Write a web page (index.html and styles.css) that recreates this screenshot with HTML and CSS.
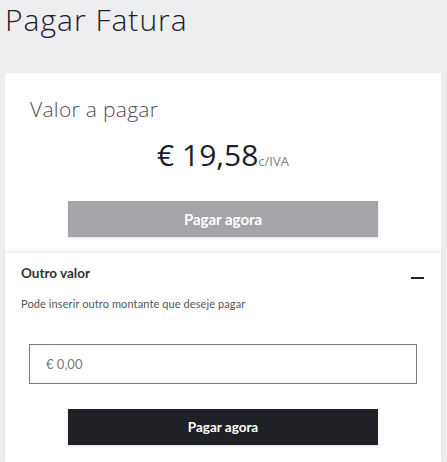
FILE: index.html
```html
<!DOCTYPE html>
<html>
<head>
    <meta charset="UTF-8">
    <title>Pagar Fatura</title>
    <link rel="stylesheet" href="styles.css">
</head>
<body>
    <h1 class="page-title">Pagar Fatura</h1>
    <div class="card">
        <div class="amount-section">
            <h2 class="amount-label">Valor a pagar</h2>
            <div class="amount-value">€ 19,58<span class="tax">c/IVA</span></div>
            <button class="pay-btn disabled">Pagar agora</button>
        </div>
        <div class="other-section">
            <div class="other-header">
                <span class="other-title">Outro valor</span>
                <span class="toggle"></span>
            </div>
            <p class="other-hint">Pode inserir outro montante que deseje pagar</p>
            <input type="text" class="amount-input" placeholder="€ 0,00">
            <button class="pay-btn primary">Pagar agora</button>
        </div>
    </div>
</body>
</html>
```
FILE: styles.css
```css
body {
    background: #eeeef1;
    font-family: Lato, 'Open Sans', sans-serif;
    margin: 0;
    color: #202027;
}

.page-title {
    margin: 0;
    padding: 2px 0 0 5px;
    font-family: 'Open Sans', sans-serif;
    font-size: 30px;
    font-weight: 300;
    line-height: 36px;
    letter-spacing: 1px;
}

.card {
    background: #fff;
    margin: 35px 6px 0 5px;
}

.amount-section {
    padding: 22px 25px 16px;
    text-align: center;
}

.amount-label {
    margin: 0;
    text-align: left;
    font-family: 'Open Sans', sans-serif;
    font-size: 21px;
    font-weight: 300;
    color: #505058;
    line-height: 28px;
    letter-spacing: 0.3px;
}

.amount-value {
    margin-top: 12px;
    font-family: 'Open Sans', sans-serif;
    font-size: 30px;
    line-height: 40px;
}

.tax {
    font-size: 13px;
    color: #808088;
}

.pay-btn {
    display: block;
    width: 310px;
    height: 36px;
    margin: 0 auto;
    border: none;
    font-family: Lato, sans-serif;
    font-weight: 700;
    color: #fff;
    box-shadow: 0 1px 2px rgba(0, 0, 0, 0.12);
}

.pay-btn.disabled {
    margin-top: 20px;
    background: #a5a4a9;
    font-size: 15px;
}

.pay-btn.primary {
    margin-top: 25px;
    background: #202027;
    font-size: 13.5px;
}

.other-section {
    padding: 8px 24px 17px;
    box-shadow: 0 -2px 5px rgba(0, 0, 0, 0.08);
}

.other-header {
    display: flex;
    justify-content: space-between;
    align-items: center;
    margin-left: -8px;
    margin-right: -7px;
    height: 24px;
}

.other-title {
    font-size: 13.5px;
    font-weight: 700;
    color: #303036;
}

.toggle {
    width: 13px;
    height: 2px;
    margin-top: 10px;
    background: #202027;
}

.other-hint {
    margin: 12px 0 0 -8px;
    font-size: 11px;
    letter-spacing: 0.1px;
    color: #55555c;
}

.amount-input {
    display: block;
    width: 100%;
    height: 40px;
    margin-top: 34px;
    padding: 0 16px;
    border: 1px solid #7a7a80;
    box-sizing: border-box;
    font-family: Lato, sans-serif;
    font-size: 13px;
}

.amount-input::placeholder {
    color: #7a7a80;
}
```
